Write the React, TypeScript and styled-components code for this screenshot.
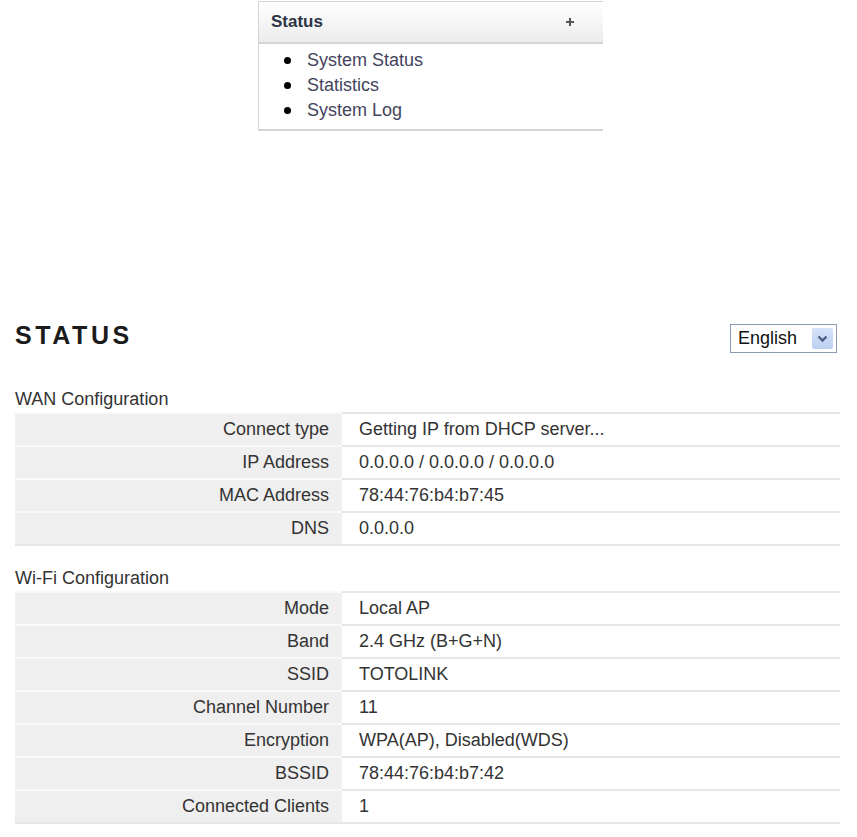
import styled, { createGlobalStyle } from 'styled-components';

const GlobalStyle = createGlobalStyle`
  body {
    margin: 0;
    background: #ffffff;
    font-family: "Liberation Sans", Arial, sans-serif;
    color: #333333;
  }
`;

const Page = styled.div`
  width: 857px;
  min-height: 837px;
  display: flex;
  flex-direction: column;
`;

const MenuPanel = styled.div`
  margin: 1px 0 0 258px;
  width: 344px;
  border-left: 1px solid #d4d4d4;
  border-top: 1px solid #d4d4d4;
  border-bottom: 2px solid #d4d4d4;
`;

const MenuHeader = styled.div`
  height: 40px;
  display: flex;
  align-items: center;
  justify-content: space-between;
  padding: 0 29px 0 12px;
  background: linear-gradient(#ffffff, #ececec);
  border-bottom: 2px solid #d4d4d4;
`;

const MenuTitle = styled.span`
  font-size: 17px;
  font-weight: bold;
  color: #2c3447;
`;

const PlusIcon = styled.span`
  position: relative;
  width: 8px;
  height: 8px;

  &::before,
  &::after {
    content: '';
    position: absolute;
    background: #555555;
  }
  &::before {
    left: 3px;
    top: 0;
    width: 2px;
    height: 8px;
  }
  &::after {
    left: 0;
    top: 3px;
    width: 8px;
    height: 2px;
  }
`;

const MenuList = styled.ul`
  margin: 0;
  padding: 4px 0 6px 47px;
  list-style: none;
`;

const MenuItem = styled.li`
  position: relative;
  font-size: 18px;
  line-height: 25px;
  color: #44445c;
  padding-left: 1px;

  &::before {
    content: '';
    position: absolute;
    left: -22px;
    top: 9px;
    width: 7px;
    height: 7px;
    border-radius: 50%;
    background: #000000;
  }
`;

const StatusSection = styled.div`
  margin-top: 189px;
  padding: 0 17px 0 15px;
  display: flex;
  flex-direction: column;
`;

const TitleRow = styled.div`
  display: flex;
  justify-content: space-between;
  align-items: flex-start;
  margin-bottom: 36px;
`;

const Title = styled.h1`
  margin: 0;
  font-size: 25px;
  line-height: 30px;
  font-weight: bold;
  letter-spacing: 3.6px;
  color: #1b1b1b;
`;

const LangSelect = styled.div`
  margin: 4px 3px 0 0;
  width: 95px;
  height: 27px;
  border: 1px solid #8a9bb3;
  display: flex;
  align-items: center;
  justify-content: space-between;
  padding: 0 3px 0 7px;
  font-size: 18px;
  color: #111111;
`;

const LangButton = styled.span`
  width: 21px;
  height: 21px;
  display: flex;
  align-items: center;
  justify-content: center;
  background: linear-gradient(#d6e3f8, #bcd0f2);
  border-radius: 2px;
`;

const GroupLabel = styled.div`
  font-size: 18px;
  line-height: 20px;
  padding-bottom: 3px;
  color: #333333;
`;

const InfoTable = styled.div<{ $gap?: number }>`
  display: flex;
  flex-direction: column;
  margin-bottom: ${(p) => p.$gap ?? 0}px;
`;

const InfoRow = styled.div`
  display: grid;
  grid-template-columns: 327px 1fr;
  height: 33px;
  &:last-child > * {
    border-bottom: 2px solid #e6e6e6;
  }
`;

const LabelCell = styled.div`
  background: #efefef;
  border-top: 2px solid #f9f9f9;
  text-align: right;
  padding-right: 13px;
  font-size: 18px;
  line-height: 31px;
  color: #333333;
`;

const ValueCell = styled.div`
  border-top: 2px solid #e6e6e6;
  padding-left: 17px;
  font-size: 18px;
  line-height: 31px;
  color: #333333;
`;

const wan = [
  ['Connect type', 'Getting IP from DHCP server...'],
  ['IP Address', '0.0.0.0 / 0.0.0.0 / 0.0.0.0'],
  ['MAC Address', '78:44:76:b4:b7:45'],
  ['DNS', '0.0.0.0'],
];

const wifi = [
  ['Mode', 'Local AP'],
  ['Band', '2.4 GHz (B+G+N)'],
  ['SSID', 'TOTOLINK'],
  ['Channel Number', '11'],
  ['Encryption', 'WPA(AP), Disabled(WDS)'],
  ['BSSID', '78:44:76:b4:b7:42'],
  ['Connected Clients', '1'],
];

const App = () => {
  return (
    <Page>
      <GlobalStyle />
      <MenuPanel>
        <MenuHeader>
          <MenuTitle>Status</MenuTitle>
          <PlusIcon />
        </MenuHeader>
        <MenuList>
          <MenuItem>System Status</MenuItem>
          <MenuItem>Statistics</MenuItem>
          <MenuItem>System Log</MenuItem>
        </MenuList>
      </MenuPanel>

      <StatusSection>
        <TitleRow>
          <Title>STATUS</Title>
          <LangSelect>
            English
            <LangButton>
              <svg width="11" height="8" viewBox="0 0 11 8">
                <path d="M1.5 1.5 L5.5 5.5 L9.5 1.5" fill="none" stroke="#4a5d86" strokeWidth="2.4" />
              </svg>
            </LangButton>
          </LangSelect>
        </TitleRow>

        <GroupLabel>WAN Configuration</GroupLabel>
        <InfoTable $gap={24}>
          {wan.map(([label, value]) => (
            <InfoRow key={label}>
              <LabelCell>{label}</LabelCell>
              <ValueCell>{value}</ValueCell>
            </InfoRow>
          ))}
        </InfoTable>

        <GroupLabel>Wi-Fi Configuration</GroupLabel>
        <InfoTable>
          {wifi.map(([label, value]) => (
            <InfoRow key={label}>
              <LabelCell>{label}</LabelCell>
              <ValueCell>{value}</ValueCell>
            </InfoRow>
          ))}
        </InfoTable>
      </StatusSection>
    </Page>
  );
};

export default App;
